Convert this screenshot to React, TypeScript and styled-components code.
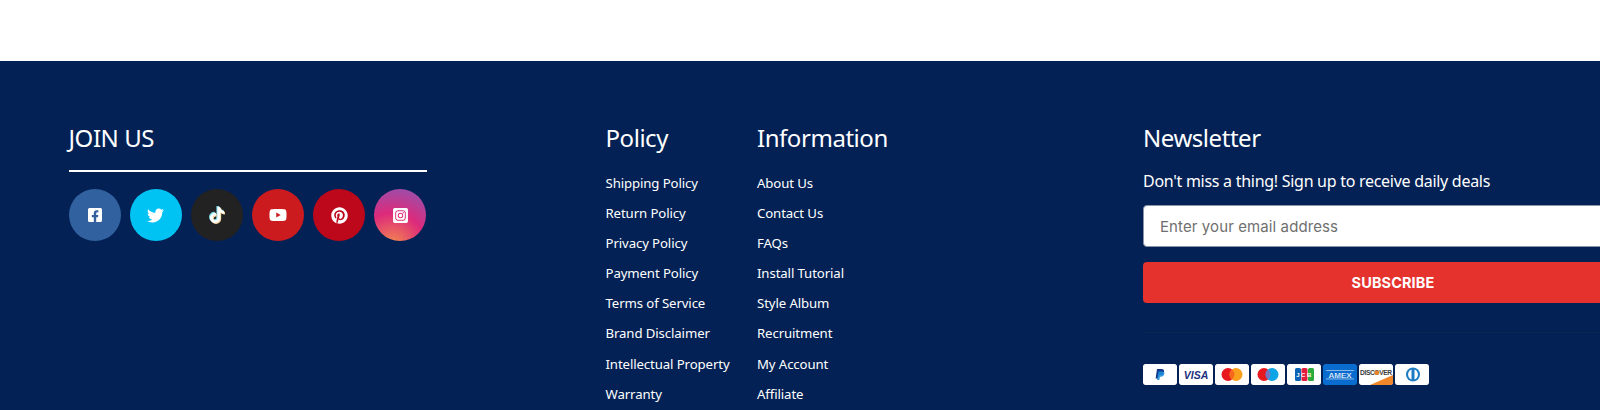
import React from "react";
import styled, { createGlobalStyle } from "styled-components";
import { FaFacebookSquare, FaTwitter, FaTiktok, FaYoutube, FaPinterest, FaInstagramSquare } from "react-icons/fa";

const Global = createGlobalStyle`
  html, body { margin: 0; padding: 0; background: #fff; overflow: hidden; }
  body { font-family: "Noto Sans", "Open Sans", Arial, sans-serif; }
  * { box-sizing: border-box; }
`;

const Page = styled.div`
  width: 1600px;
  height: 410px;
  padding-top: 61px;
  overflow: hidden;
`;

const Footer = styled.footer`
  height: 349px;
  background: #032155;
  color: #fff;
  display: flex;
  padding: 63px 0 0 68.5px;
  overflow: hidden;
`;

const JoinColumn = styled.section`
  width: 358px;
  flex: none;
  margin-right: 179px;
`;

const Heading = styled.h3`
  margin: 0;
  font-size: 24px;
  font-weight: 400;
  line-height: 28px;
  letter-spacing: -0.45px;
`;

const JoinHeading = styled(Heading)`
  padding-bottom: 18px;
  border-bottom: 2px solid #fff;
  margin-bottom: 17px;
  height: 48px;
`;

const Socials = styled.div`
  display: flex;
  justify-content: space-between;
`;

const Social = styled.a<{ $bg: string }>`
  width: 52px;
  height: 52px;
  border-radius: 50%;
  background: ${(p) => p.$bg};
  display: flex;
  align-items: center;
  justify-content: center;
  color: #fff;
`;

const TikTokGlyph = styled(FaTiktok)`
  filter: drop-shadow(1px 1px 0 #f3d6a0) drop-shadow(-0.5px -0.5px 0 #7fd8ea);
`;

const LinkColumn = styled.nav<{ $w: number }>`
  width: ${(p) => p.$w}px;
  flex: none;
`;

const LinkList = styled.ul`
  list-style: none;
  margin: 21px 0 0;
  padding: 0;
  display: flex;
  flex-direction: column;
  gap: 10px;
`;

const LinkItem = styled.li`
  font-size: 13.2px;
  line-height: 20.1px;
  letter-spacing: -0.1px;
  white-space: nowrap;
`;

const NewsColumn = styled.section`
  width: 500px;
  flex: none;
`;

const Lead = styled.p`
  margin: 17px 0 12px;
  font-size: 16px;
  line-height: 24px;
  letter-spacing: -0.28px;
  white-space: nowrap;
`;

const EmailBox = styled.div`
  height: 42px;
  background: #fff;
  border-radius: 4px;
  border: 1px solid #8a93a8;
  padding-left: 16px;
  display: flex;
  align-items: center;
  font-family: Inter, sans-serif;
  font-size: 15px;
  color: #6f6f6f;
  letter-spacing: 0.1px;
`;

const Subscribe = styled.button`
  display: block;
  width: 500px;
  height: 41px;
  margin-top: 15px;
  padding: 0;
  border: none;
  border-radius: 4px;
  background: #e5322d;
  color: #fff;
  font-family: Inter, sans-serif;
  font-weight: 700;
  font-size: 14.5px;
  letter-spacing: 0.1px;
`;

const Divider = styled.div`
  height: 1px;
  margin-top: 29px;
  background: #0c2450;
`;

const PaymentRow = styled.div`
  display: flex;
  gap: 2px;
  margin-top: 31px;
`;

const Card = styled.svg`
  width: 34px;
  height: 21px;
  display: block;
  border-radius: 2px;
  flex: none;
`;

const policy = ["Shipping Policy", "Return Policy", "Privacy Policy", "Payment Policy", "Terms of Service", "Brand Disclaimer", "Intellectual Property", "Warranty"];
const info = ["About Us", "Contact Us", "FAQs", "Install Tutorial", "Style Album", "Recruitment", "My Account", "Affiliate"];

const CardBox: React.FC<{ fill?: string; children: React.ReactNode }> = ({ fill = "#fff", children }) => (
  <Card viewBox="0 0 34 21">
    <rect width="34" height="21" rx="2" fill={fill} />
    {children}
  </Card>
);

export default function App() {
  return (
    <Page>
      <Global />
      <Footer>
        <JoinColumn>
          <JoinHeading>JOIN US</JoinHeading>
          <Socials>
            <Social $bg="#31629f"><FaFacebookSquare size={16} /></Social>
            <Social $bg="#00c3f3"><FaTwitter size={17} /></Social>
            <Social $bg="#222222"><TikTokGlyph size={16} /></Social>
            <Social $bg="#cc1b1f"><FaYoutube size={18} /></Social>
            <Social $bg="#bd081c"><FaPinterest size={17} /></Social>
            <Social $bg="radial-gradient(circle at 35% 110%, #f58f4c 0%, #dd2a7b 50%, #a34aa5 85%, #8a50b0 100%)"><FaInstagramSquare size={17} /></Social>
          </Socials>
        </JoinColumn>
        <LinkColumn $w={151.5}>
          <Heading>Policy</Heading>
          <LinkList>{policy.map((t) => <LinkItem key={t}>{t}</LinkItem>)}</LinkList>
        </LinkColumn>
        <LinkColumn $w={386}>
          <Heading>Information</Heading>
          <LinkList>{info.map((t) => <LinkItem key={t}>{t}</LinkItem>)}</LinkList>
        </LinkColumn>
        <NewsColumn>
          <Heading>Newsletter</Heading>
          <Lead>Don't miss a thing! Sign up to receive daily deals</Lead>
          <EmailBox>Enter your email address</EmailBox>
          <Subscribe>SUBSCRIBE</Subscribe>
          <Divider />
          <PaymentRow>
            <CardBox>
              <path d="M14 5h4.5c2.2 0 3 1.5 2.5 3.2-.5 2-2 2.8-3.8 2.8h-1.4l-.6 3.5h-2.6z" fill="#123a8a" />
              <path d="M15.5 7.5h4c1.6 0 2.2 1 1.8 2.6-.4 1.8-1.8 2.7-3.4 2.7h-1l-.6 3.2h-2.2z" fill="#1f8fdc" opacity=".9" />
            </CardBox>
            <CardBox>
              <text x="17" y="15" textAnchor="middle" fontFamily="Liberation Sans" fontSize="10.5" fontWeight="700" fontStyle="italic" fill="#20307c">VISA</text>
            </CardBox>
            <CardBox>
              <circle cx="13" cy="10.5" r="6.5" fill="#e8181f" />
              <circle cx="21" cy="10.5" r="6.5" fill="#f99f1b" />
              <path d="M17 5.4a6.5 6.5 0 0 1 0 10.2a6.5 6.5 0 0 1 0-10.2z" fill="#f5671e" />
            </CardBox>
            <CardBox>
              <circle cx="13" cy="10.5" r="6.5" fill="#e8181f" />
              <circle cx="21" cy="10.5" r="6.5" fill="#0ea5e6" />
              <path d="M17 5.4a6.5 6.5 0 0 1 0 10.2a6.5 6.5 0 0 1 0-10.2z" fill="#7673c0" />
            </CardBox>
            <CardBox>
              <rect x="8" y="4" width="6" height="13" rx="1.5" fill="#0b64b5" />
              <rect x="14.5" y="4" width="6" height="13" rx="1.5" fill="#e31c3d" />
              <rect x="21" y="4" width="6" height="13" rx="1.5" fill="#2bab3a" />
              <text x="17.5" y="13" textAnchor="middle" fontFamily="Liberation Sans" fontSize="6" fontWeight="700" letterSpacing="1.5" fill="#fff">JCB</text>
            </CardBox>
            <CardBox fill="#0a6cce">
              <text x="17" y="13.5" textAnchor="middle" fontFamily="Liberation Sans" fontSize="8" fontWeight="700" fill="#fff" stroke="#0a6cce" strokeWidth=".2">AMEX</text>
              <rect x="3" y="14.6" width="28" height=".7" fill="#bcd7f2" />
              <rect x="3" y="6" width="28" height=".7" fill="#bcd7f2" />
            </CardBox>
            <CardBox>
              <path d="M11 21L34 11v8a2 2 0 0 1-2 2z" fill="#f0862a" />
              <text x="17" y="11" textAnchor="middle" fontFamily="Liberation Sans" fontSize="6.6" fontWeight="700" textLength="32" fill="#3a3a3a">DISCOVER</text>
              <circle cx="18" cy="8.8" r="2.3" fill="#f0862a" />
            </CardBox>
            <CardBox>
              <circle cx="18" cy="10.5" r="7" fill="#1b7cc4" />
              <path d="M16.5 5.5a5.4 5.4 0 0 0 0 10z" fill="#fff" />
              <path d="M19.5 5.5a5.4 5.4 0 0 1 0 10z" fill="#fff" />
              <rect x="11" y="5" width="3" height="11" fill="#fff" opacity="0" />
            </CardBox>
          </PaymentRow>
        </NewsColumn>
      </Footer>
    </Page>
  );
}
